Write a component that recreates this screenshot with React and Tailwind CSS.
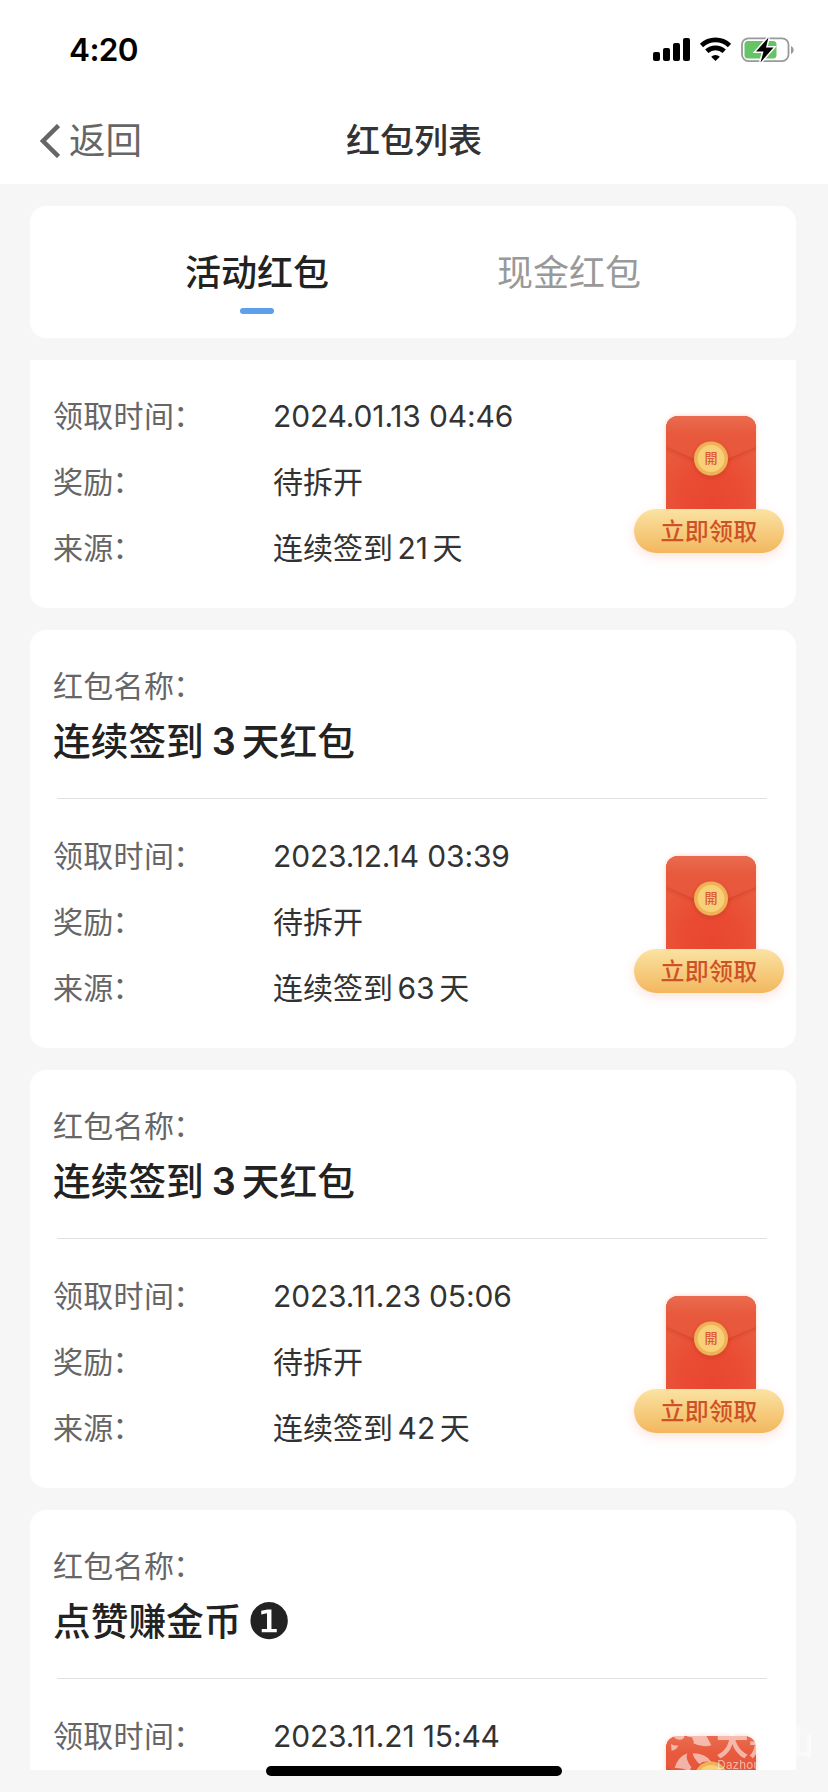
import React from 'react';

const packets = [
    { id: 1, time: "2024.01.13 04:46", reward: "待拆开", source: ["连续签到", "21", "天"] },
    { id: 2, name: ["连续签到", "3", "天红包"], time: "2023.12.14 03:39", reward: "待拆开", source: ["连续签到", "63", "天"] },
    { id: 3, name: ["连续签到", "3", "天红包"], time: "2023.11.23 05:06", reward: "待拆开", source: ["连续签到", "42", "天"] },
    { id: 4, name: ["点赞赚金币"], badge: "❶", time: "2023.11.21 15:44" },
];

const StatusBar = () => (
    <div className="h-[96px] pl-[69px] pr-[33px] flex items-center justify-between">
        <span className="text-[31.5px] leading-none font-semibold text-black mt-[3px] tracking-[-0.6px]">4:20</span>
        <svg className="mt-[3px]" width="142" height="26" viewBox="0 0 142 26">
            <rect x="0" y="15" width="7" height="9" rx="2" />
            <rect x="10" y="11" width="7" height="13" rx="2" />
            <rect x="20" y="6" width="7" height="18" rx="2" />
            <rect x="30" y="1" width="7" height="23" rx="2" />
            <g fill="none" stroke="#000" strokeWidth="4.8">
                <path d="M48.5 8.5a20.5 20.5 0 0 1 28 0" />
                <path d="M53.8 14.2a12.8 12.8 0 0 1 17.4 0" />
            </g>
            <path d="M62.500 24l-4.300-4.300a6.200 6.200 0 0 1 8.600 0z" />
            <rect x="89" y="1.300" width="46.500" height="22.800" rx="6.500" fill="none" stroke="#999" strokeWidth="1.800" />
            <rect x="91.500" y="4" width="32" height="17.500" rx="3.500" fill="#64c466" />
            <path d="M138 9v8c3.500-1.500 3.500-6.500 0-8z" fill="#999" />
            <path d="M115.500 0.500L103 14.500h7.500L107.500 25.500l13-15h-7.500z" stroke="#fff" strokeWidth="3" paintOrder="stroke" />
        </svg>
    </div>
);

const Mixed = ({ parts, gap }) => (
    <>
        {parts[0]}
        {parts[1] && <span className={gap}>{parts[1]}</span>}
        {parts[2]}
    </>
);

const Label = ({ children }) => (
    <span className="text-[#666] tracking-[0.3px]">
        {children}<span className="relative -top-px -left-px">：</span>
    </span>
);

const Row = ({ label, children }) => (
    <div className="flex h-[66px] items-center text-[30px] leading-none">
        <div className="w-[220px]"><Label>{label}</Label></div>
        <span className="text-[#333]">{children}</span>
    </div>
);

const Envelope = ({ id, button }) => (
    <div className="w-[150px] flex flex-col items-center">
        <svg className="ml-[4px]" width="102" height="93" viewBox="0 0 102 93" overflow="visible">
            <defs>
                <radialGradient id={`body${id}`} cx="0.5" cy="0.9" r="0.8">
                    <stop offset="0" stopColor="#e9462f" />
                    <stop offset="0.4" stopColor="#e94c33" />
                    <stop offset="1" stopColor="#e9603f" />
                </radialGradient>
                <linearGradient id={`flap${id}`} x1="0" y1="0" x2="0" y2="1">
                    <stop offset="0" stopColor="#ea7054" />
                    <stop offset="0.4" stopColor="#e85a3d" />
                    <stop offset="1" stopColor="#e8563a" />
                </linearGradient>
                <filter id={`shade${id}`} x="-20%" y="-20%" width="140%" height="150%">
                    <feDropShadow dx="0" dy="1.500" stdDeviation="2" floodColor="#b02c18" floodOpacity="0.4" />
                </filter>
                <filter id={`glow${id}`} x="-20%" y="-20%" width="140%" height="140%">
                    <feDropShadow dx="0" dy="0" stdDeviation="2.500" floodColor="#f08060" floodOpacity="0.35" />
                </filter>
                <clipPath id={`clip${id}`}>
                    <path d="M6 93V12a12 12 0 0 1 12-12h66a12 12 0 0 1 12 12v81z" />
                </clipPath>
            </defs>
            <path d="M6 93V12a12 12 0 0 1 12-12h66a12 12 0 0 1 12 12v81z" fill="#e9563a" filter={`url(#glow${id})`} />
            <g clipPath={`url(#clip${id})`}>
                <rect x="6" width="90" height="93" fill={`url(#body${id})`} />
                <path d="M0-4h102v32L58 47q-7 3-14 0L0 28z" fill={`url(#flap${id})`} filter={`url(#shade${id})`} />
            </g>
            <circle cx="51" cy="42.500" r="17" fill="#efb257" filter={`url(#shade${id})`} />
            <circle cx="51" cy="42.500" r="13.500" fill="#f8d077" />
            {button && <text x="51" y="47" textAnchor="middle" fontSize="13" fill="#dc5a35" fontWeight="500">開</text>}
        </svg>
        {button && (
            <button className="relative w-[150px] h-[44px] pt-[2px] rounded-full bg-linear-to-b from-[#fae3a2] to-[#f2b75c] shadow-[0_4px_12px_rgba(240,90,60,0.16)] text-[24px] leading-none font-medium text-[#cf5127] tracking-[0.3px]">
                立即领取
            </button>
        )}
    </div>
);

const PacketCard = ({ packet }) => (
    <div className={`shrink-0 bg-white pl-[23px] pr-[12px] ${packet.name ? "h-[418px] rounded-[16px]" : "h-[248px] rounded-b-[16px]"}`}>
        {packet.name && (
            <>
                <div className="h-[168px] pt-[41px]">
                    <div className="text-[30px] leading-[30px]"><Label>红包名称</Label></div>
                    <div className="mt-[21px] h-[38px] text-[37.7px] leading-[38px] font-medium text-[#222] whitespace-nowrap">
                        <Mixed parts={packet.name} gap="ml-[8px] mr-[6px] font-semibold" />
                        {packet.badge && <span className="ml-[5px] text-[50px] leading-[38px] font-normal font-['DejaVu_Sans'] align-[-4px]">{packet.badge}</span>}
                    </div>
                </div>
                <div className="ml-[4px] mr-[17px] h-px bg-[#e2e2e2]" />
            </>
        )}
        <div className={packet.name ? "flex justify-between pt-[24px]" : "flex justify-between pt-[23px]"}>
            <div>
                <Row label="领取时间"><span className="tracking-[-0.15px]">{packet.time}</span></Row>
                {packet.reward && <Row label="奖励">{packet.reward}</Row>}
                {packet.source && <Row label="来源"><Mixed parts={packet.source} gap="mx-[4.500px]" /></Row>}
            </div>
            <div className="pt-[33px]">
                <Envelope id={packet.id} button={!!packet.source} />
            </div>
        </div>
    </div>
);

const Watermark = () => (
    <div className="absolute left-[656px] top-[1722px] w-[172px] h-[70px] text-white opacity-55">
        <svg width="172" height="70" viewBox="0 0 516 210" fill="currentColor">
            <path d="M45 66q10 6 22 4-4 14-20 16z" />
            <path d="M50 30q40-10 34 18-14 12-30-2z" />
            <path d="M94 30q20 0 30 10 14 2 26 0l16 30q-28 8-54-6 4-8-2-10 4-10-16-10z" />
            <path d="M110 94q40 0 56 26-24-4-36 6-18-18-20-32z" />
            <path d="M94 94q-8 16 12 42l-6 12q-22-12-44-10 8-32 38-44z" />
            <text x="180" y="100" fontSize="98" fontWeight="700">大舟山</text>
            <text x="184" y="140" fontSize="35" letterSpacing="0.5">Dazhoushan</text>
        </svg>
    </div>
);

const App = () => {
    return (
        <div className="relative w-[828px] h-[1792px] overflow-hidden bg-[#f6f6f6] flex flex-col font-['Inter','Noto_Sans_CJK_SC',sans-serif]">
            <header className="h-[184px] shrink-0 bg-white">
                <StatusBar />
                <div className="grid grid-cols-3 h-[88px] items-center px-[40px] pt-[2px]">
                    <div className="flex items-center gap-[9px] text-[36.5px] leading-none text-[#666]">
                        <svg width="20" height="34" viewBox="0 0 20 34" fill="none" stroke="#666" strokeWidth="4.500">
                            <path d="M18.500 1.500L3 17l15.500 15.500" />
                        </svg>
                        返回
                    </div>
                    <h1 className="text-center text-[34px] leading-none font-medium text-[#333]">红包列表</h1>
                </div>
            </header>

            <div className="ml-[30px] mr-[32px] mt-[22px] h-[132px] shrink-0 rounded-[16px] bg-white flex px-[71px]">
                <div className="flex-1 flex flex-col items-center pt-[49px]">
                    <span className="text-[36px] leading-[36px] font-medium text-[#222]">活动红包</span>
                    <span className="mt-[17px] w-[34px] h-[6px] rounded-full bg-[#5e9fec]" />
                </div>
                <div className="flex-1 flex flex-col items-center pt-[49px]">
                    <span className="text-[36px] leading-[36px] text-[#999]">现金红包</span>
                </div>
            </div>

            {/* list is scrolled part way through the first card */}
            <div className="ml-[30px] mr-[32px] mt-[22px] h-[1410px] shrink-0 overflow-hidden flex flex-col gap-[22px]">
                {packets.map(p => <PacketCard key={p.id} packet={p} />)}
            </div>

            <div className="absolute left-[266px] top-[1766px] w-[296px] h-[10px] rounded-full bg-black" />
            <Watermark />
        </div>
    );
};

export default App;
